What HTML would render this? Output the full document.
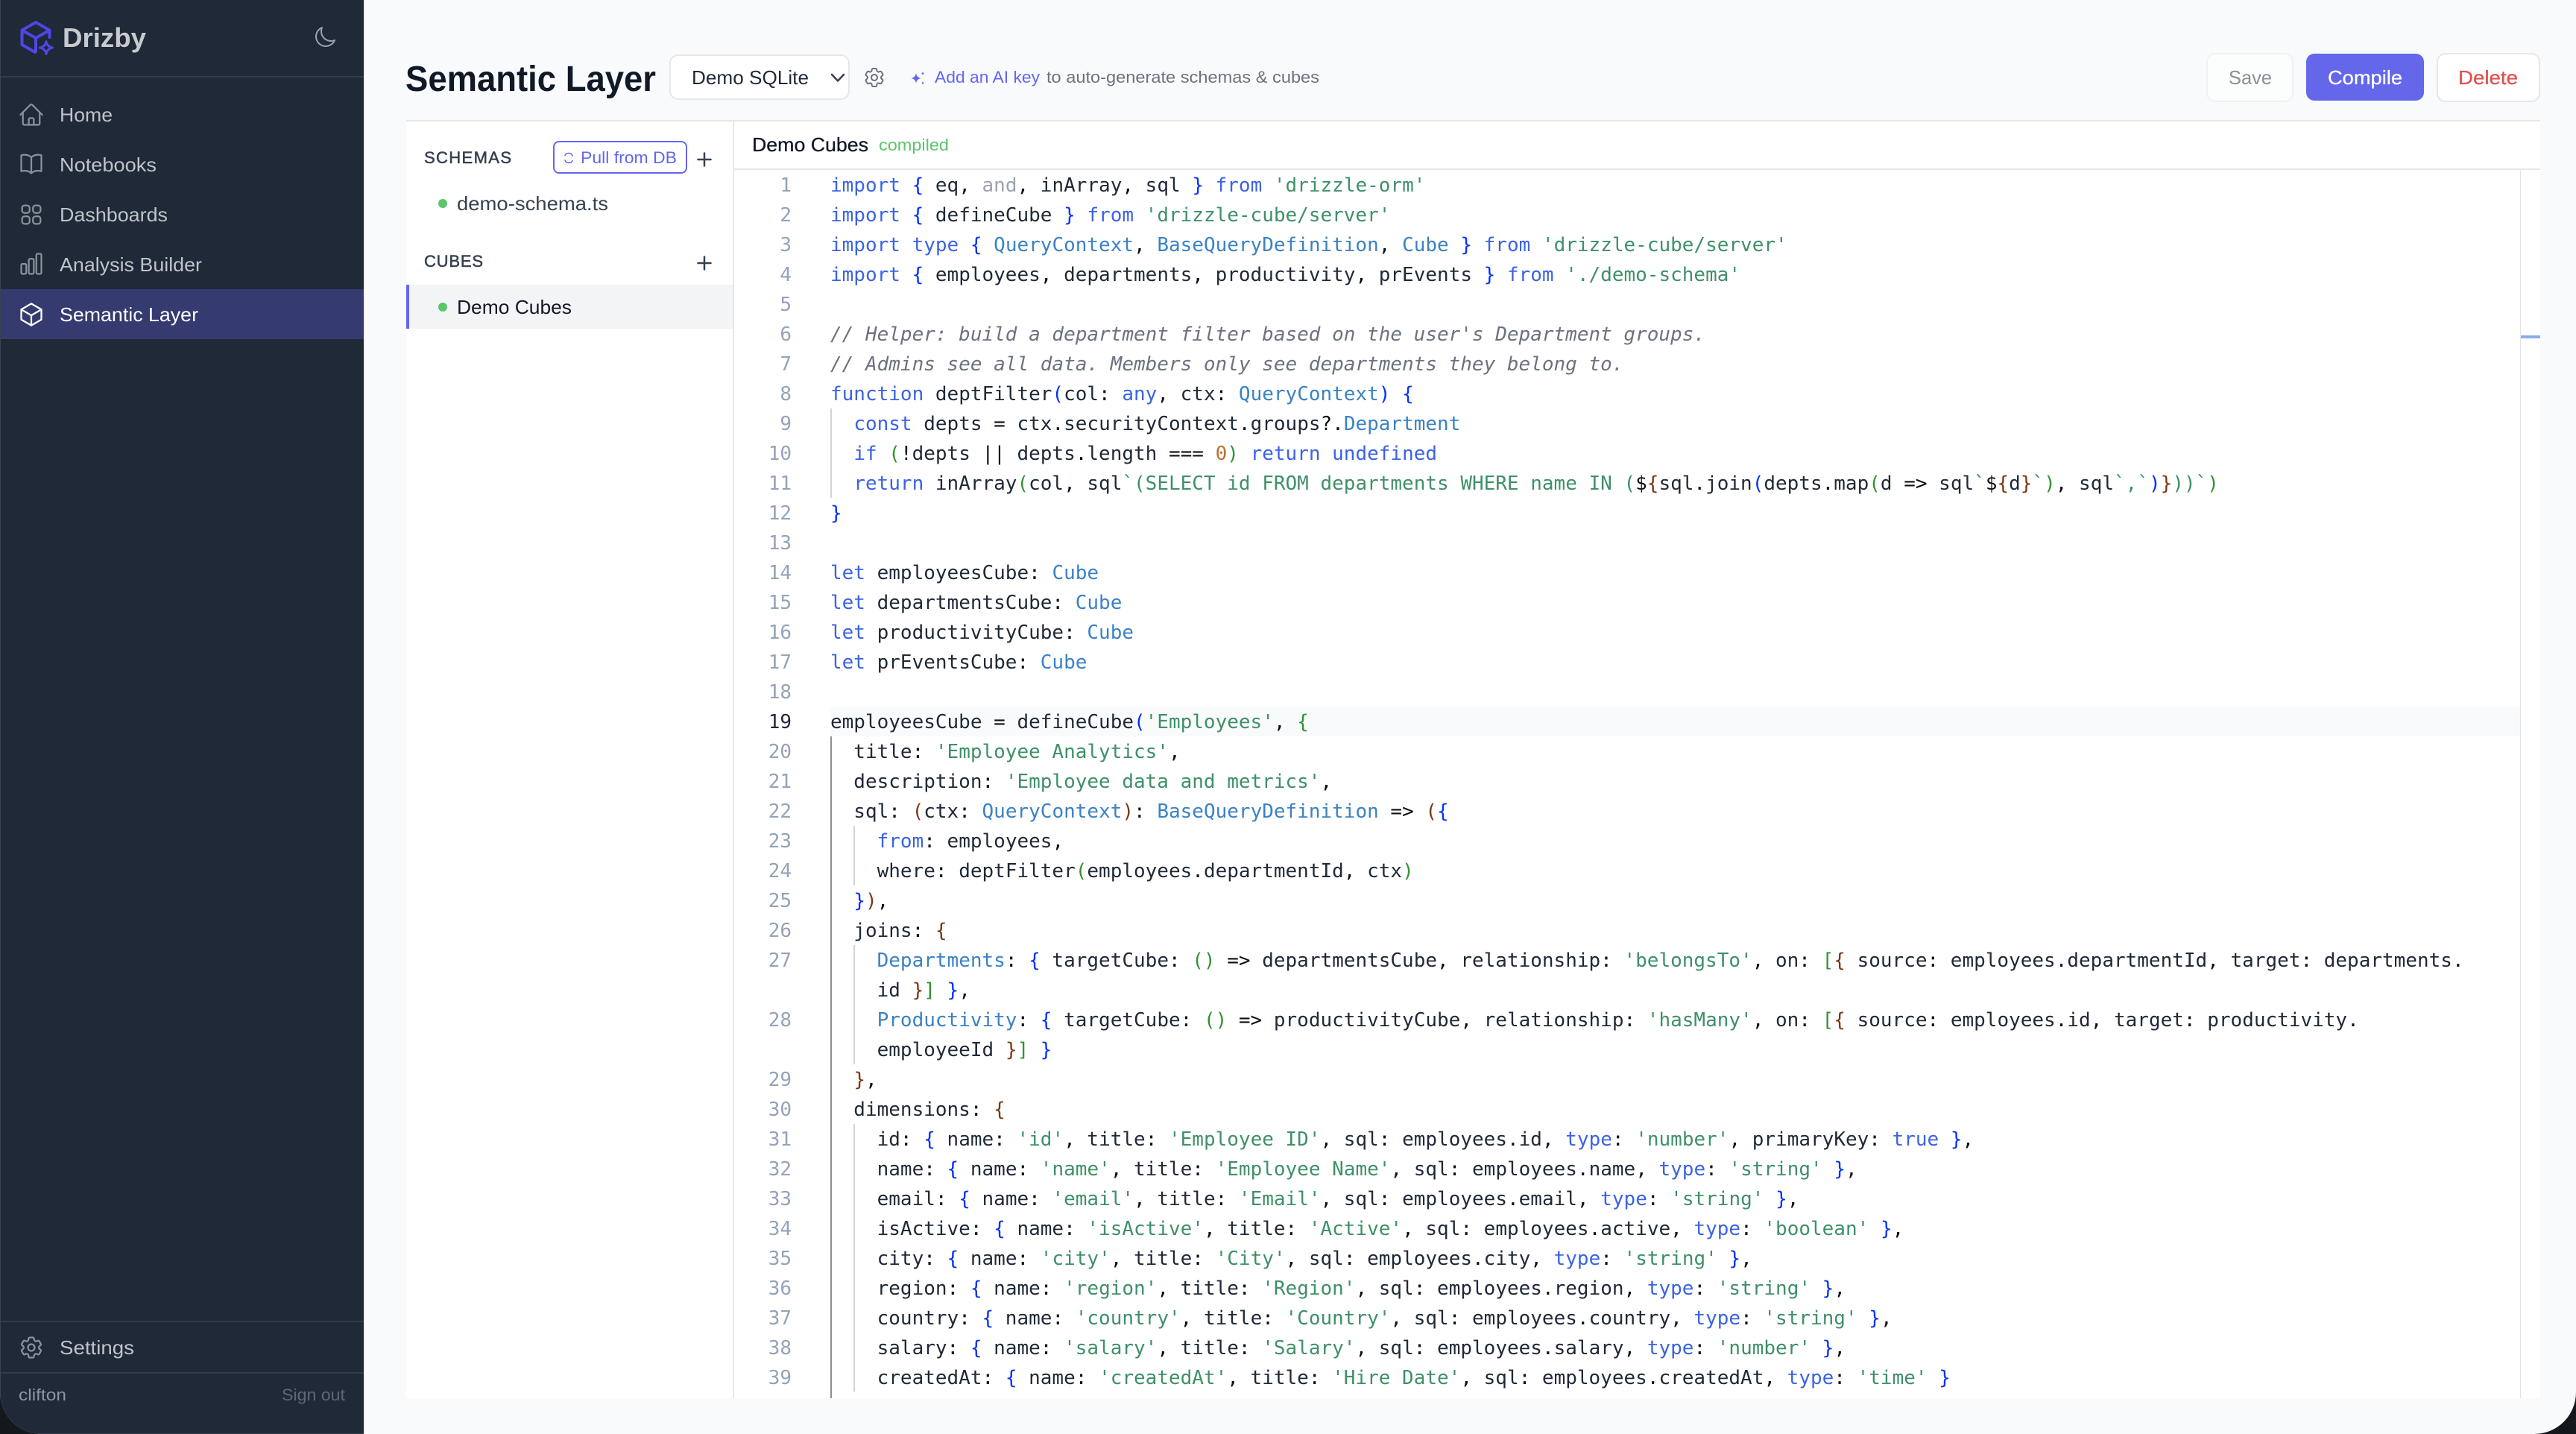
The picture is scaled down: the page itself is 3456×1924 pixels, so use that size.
<!DOCTYPE html>
<html lang="en"><head><meta charset="utf-8"><title>Semantic Layer</title>
<style>
html,body{margin:0;padding:0;width:3456px;height:1924px;overflow:hidden;background:#14181c}
#app{position:absolute;left:0;top:0;width:3456px;height:1924px;background:#f9fafb;border-radius:0 0 56px 56px;overflow:hidden}
.box{position:absolute;box-sizing:border-box}
#code{position:absolute;left:985px;top:228px;width:2396px;height:1648px;overflow:hidden;font:26px/40px "DejaVu Sans Mono",monospace;color:#1f2937;font-variant-ligatures:none;white-space:pre}
.l{position:absolute;left:129px;height:40px;right:0;margin-top:1px}
.n{position:absolute;left:15px;width:62px;height:40px;text-align:right;color:#94a3b8;margin-top:1px}
b,u,s,em,i,var,a{font-weight:400;font-style:normal;text-decoration:none}
b{color:#3b63e4}s{color:#3b82c4}u{color:#3f9068}em{color:#0d1117}i{color:#6b7280;font-style:italic}var{color:#c2702b}
.m{color:#9ca3af}.B{color:#0431fa}.G{color:#319331}.R{color:#7b3814}
svg text{font-family:"Liberation Sans",sans-serif}
</style></head><body>
<div id="app">
<div class="box" style="left:0;top:0;width:488px;height:1924px;background:#1f2937;border-left:1px solid #394250;border-bottom:1px solid #343d4b"></div>
<div class="box" style="left:1px;top:102px;width:487px;height:2px;background:#343d4b"></div>
<div class="box" style="left:1px;top:388px;width:487px;height:67px;background:#353b6f"></div>
<div class="box" style="left:1px;top:1772px;width:487px;height:2px;background:#343d4b"></div>
<div class="box" style="left:1px;top:1841px;width:487px;height:2px;background:#343d4b"></div>

<div class="box" style="left:898px;top:73px;width:242px;height:61px;background:#fff;border:2px solid #e5e7eb;border-radius:12px"></div>
<div class="box" style="left:2960px;top:71px;width:117px;height:66px;background:#fcfdfd;border:2px solid #f0f1f3;border-radius:12px"></div>
<div class="box" style="left:3094px;top:72px;width:158px;height:63px;background:#6467e9;border-radius:11px"></div>
<div class="box" style="left:3269px;top:71px;width:139px;height:66px;background:#fff;border:2px solid #e5e7eb;border-radius:12px"></div>

<div class="box" style="left:545px;top:161px;width:2863px;height:1715px;background:#fff;border-top:2px solid #e5e7eb"></div>
<div class="box" style="left:983px;top:163px;width:2px;height:1713px;background:#e5e7eb"></div>
<div class="box" style="left:985px;top:226px;width:2423px;height:2px;background:#e5e7eb"></div>
<div class="box" style="left:742px;top:189px;width:180px;height:44px;border:2px solid #6366f1;border-radius:8px"></div>
<div class="box" style="left:545px;top:382px;width:438px;height:59px;background:#f3f4f6;border-left:4px solid #6366f1"></div>
<div class="box" style="left:588px;top:267px;width:12px;height:12px;border-radius:50%;background:#5cc46b"></div>
<div class="box" style="left:588px;top:406px;width:12px;height:12px;border-radius:50%;background:#5cc46b"></div>
<div class="box" style="left:3381px;top:228px;width:1px;height:1648px;background:#e1e3e7"></div>
<div class="box" style="left:3382px;top:450px;width:26px;height:4px;background:#8aabf0"></div>

<div id="code">
<div class="box" style="left:129px;top:720px;right:0;height:40px;background:#f9fafb"></div>
<div class="box" style="left:129px;top:320px;width:2px;height:120px;background:#d4d4d4"></div>
<div class="box" style="left:129px;top:760px;width:2px;height:888px;background:#8d8f94"></div>
<div class="box" style="left:160px;top:880px;width:2px;height:80px;background:#d4d4d4"></div>
<div class="box" style="left:160px;top:1040px;width:2px;height:160px;background:#d4d4d4"></div>
<div class="box" style="left:160px;top:1280px;width:2px;height:359px;background:#d4d4d4"></div>

<div class="n" style="top:0">1</div><div class="l" style="top:0"><b>import</b> <a class="B">{</a> eq<em>,</em> <span class="m">and</span><em>,</em> inArray<em>,</em> sql <a class="B">}</a> <b>from</b> <u>'drizzle-orm'</u></div>
<div class="n" style="top:40px">2</div><div class="l" style="top:40px"><b>import</b> <a class="B">{</a> defineCube <a class="B">}</a> <b>from</b> <u>'drizzle-cube/server'</u></div>
<div class="n" style="top:80px">3</div><div class="l" style="top:80px"><b>import</b> <b>type</b> <a class="B">{</a> <s>QueryContext</s><em>,</em> <s>BaseQueryDefinition</s><em>,</em> <s>Cube</s> <a class="B">}</a> <b>from</b> <u>'drizzle-cube/server'</u></div>
<div class="n" style="top:120px">4</div><div class="l" style="top:120px"><b>import</b> <a class="B">{</a> employees<em>,</em> departments<em>,</em> productivity<em>,</em> prEvents <a class="B">}</a> <b>from</b> <u>'./demo-schema'</u></div>
<div class="n" style="top:160px">5</div>
<div class="n" style="top:200px">6</div><div class="l" style="top:200px"><i>// Helper: build a department filter based on the user's Department groups.</i></div>
<div class="n" style="top:240px">7</div><div class="l" style="top:240px"><i>// Admins see all data. Members only see departments they belong to.</i></div>
<div class="n" style="top:280px">8</div><div class="l" style="top:280px"><b>function</b> deptFilter<a class="B">(</a>col<em>:</em> <b>any</b><em>,</em> ctx<em>:</em> <s>QueryContext</s><a class="B">)</a> <a class="B">{</a></div>
<div class="n" style="top:320px">9</div><div class="l" style="top:320px">  <b>const</b> depts <em>=</em> ctx<em>.</em>securityContext<em>.</em>groups<em>?.</em><s>Department</s></div>
<div class="n" style="top:360px">10</div><div class="l" style="top:360px">  <b>if</b> <a class="G">(</a><em>!</em>depts <em>||</em> depts<em>.</em>length <em>===</em> <var>0</var><a class="G">)</a> <b>return</b> <b>undefined</b></div>
<div class="n" style="top:400px">11</div><div class="l" style="top:400px">  <b>return</b> inArray<a class="G">(</a>col<em>,</em> sql<u>`(SELECT id FROM departments WHERE name IN (</u><em>$</em><a class="R">{</a>sql<em>.</em>join<a class="B">(</a>depts<em>.</em>map<a class="G">(</a>d <em>=&gt;</em> sql<u>`</u><em>$</em><a class="R">{</a>d<a class="R">}</a><u>`</u><a class="G">)</a><em>,</em> sql<u>`,`</u><a class="B">)</a><a class="R">}</a><u>))`</u><a class="G">)</a></div>
<div class="n" style="top:440px">12</div><div class="l" style="top:440px"><a class="B">}</a></div>
<div class="n" style="top:480px">13</div>
<div class="n" style="top:520px">14</div><div class="l" style="top:520px"><b>let</b> employeesCube<em>:</em> <s>Cube</s></div>
<div class="n" style="top:560px">15</div><div class="l" style="top:560px"><b>let</b> departmentsCube<em>:</em> <s>Cube</s></div>
<div class="n" style="top:600px">16</div><div class="l" style="top:600px"><b>let</b> productivityCube<em>:</em> <s>Cube</s></div>
<div class="n" style="top:640px">17</div><div class="l" style="top:640px"><b>let</b> prEventsCube<em>:</em> <s>Cube</s></div>
<div class="n" style="top:680px">18</div>
<div class="n" style="top:720px;color:#1f2937">19</div><div class="l" style="top:720px">employeesCube <em>=</em> defineCube<a class="B">(</a><u>'Employees'</u><em>,</em> <a class="G">{</a></div>
<div class="n" style="top:760px">20</div><div class="l" style="top:760px">  title<em>:</em> <u>'Employee Analytics'</u><em>,</em></div>
<div class="n" style="top:800px">21</div><div class="l" style="top:800px">  description<em>:</em> <u>'Employee data and metrics'</u><em>,</em></div>
<div class="n" style="top:840px">22</div><div class="l" style="top:840px">  sql<em>:</em> <a class="R">(</a>ctx<em>:</em> <s>QueryContext</s><a class="R">)</a><em>:</em> <s>BaseQueryDefinition</s> <em>=&gt;</em> <a class="R">(</a><a class="B">{</a></div>
<div class="n" style="top:880px">23</div><div class="l" style="top:880px">    <b>from</b><em>:</em> employees<em>,</em></div>
<div class="n" style="top:920px">24</div><div class="l" style="top:920px">    where<em>:</em> deptFilter<a class="G">(</a>employees<em>.</em>departmentId<em>,</em> ctx<a class="G">)</a></div>
<div class="n" style="top:960px">25</div><div class="l" style="top:960px">  <a class="B">}</a><a class="R">)</a><em>,</em></div>
<div class="n" style="top:1000px">26</div><div class="l" style="top:1000px">  joins<em>:</em> <a class="R">{</a></div>
<div class="n" style="top:1040px">27</div><div class="l" style="top:1040px">    <s>Departments</s><em>:</em> <a class="B">{</a> targetCube<em>:</em> <a class="G">()</a> <em>=&gt;</em> departmentsCube<em>,</em> relationship<em>:</em> <u>'belongsTo'</u><em>,</em> on<em>:</em> <a class="G">[</a><a class="R">{</a> source<em>:</em> employees<em>.</em>departmentId<em>,</em> target<em>:</em> departments<em>.</em></div>
<div class="l" style="top:1080px">    id <a class="R">}</a><a class="G">]</a> <a class="B">}</a><em>,</em></div>
<div class="n" style="top:1120px">28</div><div class="l" style="top:1120px">    <s>Productivity</s><em>:</em> <a class="B">{</a> targetCube<em>:</em> <a class="G">()</a> <em>=&gt;</em> productivityCube<em>,</em> relationship<em>:</em> <u>'hasMany'</u><em>,</em> on<em>:</em> <a class="G">[</a><a class="R">{</a> source<em>:</em> employees<em>.</em>id<em>,</em> target<em>:</em> productivity<em>.</em></div>
<div class="l" style="top:1160px">    employeeId <a class="R">}</a><a class="G">]</a> <a class="B">}</a></div>
<div class="n" style="top:1200px">29</div><div class="l" style="top:1200px">  <a class="R">}</a><em>,</em></div>
<div class="n" style="top:1240px">30</div><div class="l" style="top:1240px">  dimensions<em>:</em> <a class="R">{</a></div>
<div class="n" style="top:1280px">31</div><div class="l" style="top:1280px">    id<em>:</em> <a class="B">{</a> name<em>:</em> <u>'id'</u><em>,</em> title<em>:</em> <u>'Employee ID'</u><em>,</em> sql<em>:</em> employees<em>.</em>id<em>,</em> <b>type</b><em>:</em> <u>'number'</u><em>,</em> primaryKey<em>:</em> <b>true</b> <a class="B">}</a><em>,</em></div>
<div class="n" style="top:1320px">32</div><div class="l" style="top:1320px">    name<em>:</em> <a class="B">{</a> name<em>:</em> <u>'name'</u><em>,</em> title<em>:</em> <u>'Employee Name'</u><em>,</em> sql<em>:</em> employees<em>.</em>name<em>,</em> <b>type</b><em>:</em> <u>'string'</u> <a class="B">}</a><em>,</em></div>
<div class="n" style="top:1360px">33</div><div class="l" style="top:1360px">    email<em>:</em> <a class="B">{</a> name<em>:</em> <u>'email'</u><em>,</em> title<em>:</em> <u>'Email'</u><em>,</em> sql<em>:</em> employees<em>.</em>email<em>,</em> <b>type</b><em>:</em> <u>'string'</u> <a class="B">}</a><em>,</em></div>
<div class="n" style="top:1400px">34</div><div class="l" style="top:1400px">    isActive<em>:</em> <a class="B">{</a> name<em>:</em> <u>'isActive'</u><em>,</em> title<em>:</em> <u>'Active'</u><em>,</em> sql<em>:</em> employees<em>.</em>active<em>,</em> <b>type</b><em>:</em> <u>'boolean'</u> <a class="B">}</a><em>,</em></div>
<div class="n" style="top:1440px">35</div><div class="l" style="top:1440px">    city<em>:</em> <a class="B">{</a> name<em>:</em> <u>'city'</u><em>,</em> title<em>:</em> <u>'City'</u><em>,</em> sql<em>:</em> employees<em>.</em>city<em>,</em> <b>type</b><em>:</em> <u>'string'</u> <a class="B">}</a><em>,</em></div>
<div class="n" style="top:1480px">36</div><div class="l" style="top:1480px">    region<em>:</em> <a class="B">{</a> name<em>:</em> <u>'region'</u><em>,</em> title<em>:</em> <u>'Region'</u><em>,</em> sql<em>:</em> employees<em>.</em>region<em>,</em> <b>type</b><em>:</em> <u>'string'</u> <a class="B">}</a><em>,</em></div>
<div class="n" style="top:1520px">37</div><div class="l" style="top:1520px">    country<em>:</em> <a class="B">{</a> name<em>:</em> <u>'country'</u><em>,</em> title<em>:</em> <u>'Country'</u><em>,</em> sql<em>:</em> employees<em>.</em>country<em>,</em> <b>type</b><em>:</em> <u>'string'</u> <a class="B">}</a><em>,</em></div>
<div class="n" style="top:1560px">38</div><div class="l" style="top:1560px">    salary<em>:</em> <a class="B">{</a> name<em>:</em> <u>'salary'</u><em>,</em> title<em>:</em> <u>'Salary'</u><em>,</em> sql<em>:</em> employees<em>.</em>salary<em>,</em> <b>type</b><em>:</em> <u>'number'</u> <a class="B">}</a><em>,</em></div>
<div class="n" style="top:1600px">39</div><div class="l" style="top:1600px">    createdAt<em>:</em> <a class="B">{</a> name<em>:</em> <u>'createdAt'</u><em>,</em> title<em>:</em> <u>'Hire Date'</u><em>,</em> sql<em>:</em> employees<em>.</em>createdAt<em>,</em> <b>type</b><em>:</em> <u>'time'</u> <a class="B">}</a></div>
<div class="l" style="top:1640px">  <a class="R">}</a><em>,</em></div>
</div>

<svg class="box" style="left:0;top:0" width="3456" height="1924" viewBox="0 0 3456 1924" fill="none">
<!-- logo -->
<g stroke="#4f46e5" stroke-width="4" stroke-linecap="round" stroke-linejoin="round">
<path d="M66.500 50V40.500L48 30 29.500 40.500V60L47 70"/>
<path d="M29.500 40.500 48 51 66.500 40.500M48 51V69"/>
<path stroke-width="3" d="M62 55.500Q63.200 62.800 70.500 64 63.200 65.200 62 72.500 60.800 65.200 53.500 64 60.800 62.800 62 55.500Z"/>
</g>
<text x="84" y="63" font-size="36" font-weight="700" fill="#c8cad0" textLength="112" lengthAdjust="spacingAndGlyphs">Drizby</text>
<svg x="420" y="34" width="32" height="32" viewBox="0 0 24 24" stroke="#9ca3af" stroke-width="1.5" stroke-linecap="round" stroke-linejoin="round"><path d="M21.752 15.002A9.72 9.72 0 0 1 18 15.750c-5.385 0-9.750-4.365-9.750-9.750 0-1.330.266-2.597.748-3.752A9.753 9.753 0 0 0 3 11.250C3 16.635 7.365 21 12.750 21a9.753 9.753 0 0 0 9.002-5.998Z"/></svg>

<!-- nav icons -->
<g stroke="#8b919c" stroke-width="1.5" stroke-linecap="round" stroke-linejoin="round">
<svg x="24" y="136" width="36" height="36" viewBox="0 0 24 24"><path d="m2.250 12 8.954-8.955c.44-.439 1.152-.439 1.591 0L21.750 12M4.500 9.750v10.125c0 .621.504 1.125 1.125 1.125H9.750v-4.875c0-.621.504-1.125 1.125-1.125h2.250c.621 0 1.125.504 1.125 1.125V21h4.125c.621 0 1.125-.504 1.125-1.125V9.750M8.250 21h8.250"/></svg>
<svg x="24" y="202" width="36" height="36" viewBox="0 0 24 24"><path d="M12 6.042A8.967 8.967 0 0 0 6 3.750c-1.052 0-2.062.18-3 .512v14.250A8.987 8.987 0 0 1 6 18c2.305 0 4.408.867 6 2.292m0-14.250a8.966 8.966 0 0 1 6-2.292c1.052 0 2.062.18 3 .512v14.250A8.987 8.987 0 0 0 18 18a8.967 8.967 0 0 0-6 2.292m0-14.250v14.250"/></svg>
<svg x="24" y="270" width="36" height="36" viewBox="0 0 24 24"><path d="M3.750 6A2.250 2.250 0 0 1 6 3.750h2.250A2.250 2.250 0 0 1 10.500 6v2.250a2.250 2.250 0 0 1-2.250 2.250H6a2.250 2.250 0 0 1-2.250-2.250V6ZM3.750 15.750A2.250 2.250 0 0 1 6 13.500h2.250a2.250 2.250 0 0 1 2.250 2.250V18a2.250 2.250 0 0 1-2.250 2.250H6A2.250 2.250 0 0 1 3.750 18v-2.250ZM13.500 6a2.250 2.250 0 0 1 2.250-2.250H18A2.250 2.250 0 0 1 20.250 6v2.250A2.250 2.250 0 0 1 18 10.500h-2.250a2.250 2.250 0 0 1-2.250-2.250V6ZM13.500 15.750a2.250 2.250 0 0 1 2.250-2.250H18a2.250 2.250 0 0 1 2.250 2.250V18A2.250 2.250 0 0 1 18 20.250h-2.250A2.250 2.250 0 0 1 13.500 18v-2.250Z"/></svg>
<svg x="24" y="336" width="36" height="36" viewBox="0 0 24 24"><path d="M3 13.125C3 12.504 3.504 12 4.125 12h2.250c.621 0 1.125.504 1.125 1.125v6.750C7.500 20.496 6.996 21 6.375 21h-2.250A1.125 1.125 0 0 1 3 19.875v-6.750ZM9.750 8.625c0-.621.504-1.125 1.125-1.125h2.250c.621 0 1.125.504 1.125 1.125v11.250c0 .621-.504 1.125-1.125 1.125h-2.250a1.125 1.125 0 0 1-1.125-1.125V8.625ZM16.500 4.125c0-.621.504-1.125 1.125-1.125h2.250C20.496 3 21 3.504 21 4.125v15.750c0 .621-.504 1.125-1.125 1.125h-2.250a1.125 1.125 0 0 1-1.125-1.125V4.125Z"/></svg>
<svg x="24" y="404" width="36" height="36" viewBox="0 0 24 24" stroke="#ffffff"><path d="m21 7.500-9-5.250L3 7.500m18 0-9 5.250m9-5.250v9l-9 5.250M3 7.500l9 5.250M3 7.500v9l9 5.250m0-9v9"/></svg>
<svg x="24" y="1790" width="36" height="36" viewBox="0 0 24 24"><path d="M9.594 3.940c.09-.542.56-.94 1.110-.94h2.593c.55 0 1.020.398 1.110.94l.213 1.281c.063.374.313.686.645.870.074.040.147.083.22.127.325.196.72.257 1.075.124l1.217-.456a1.125 1.125 0 0 1 1.370.49l1.296 2.247a1.125 1.125 0 0 1-.26 1.431l-1.003.827c-.293.241-.438.613-.43.992a7.723 7.723 0 0 1 0 .255c-.008.378.137.75.43.991l1.004.827c.424.35.534.955.26 1.430l-1.298 2.247a1.125 1.125 0 0 1-1.369.491l-1.217-.456c-.355-.133-.75-.072-1.076.124a6.470 6.470 0 0 1-.22.128c-.331.183-.581.495-.644.869l-.213 1.281c-.09.543-.56.94-1.110.94h-2.594c-.55 0-1.019-.398-1.110-.94l-.213-1.281c-.062-.374-.312-.686-.644-.870a6.520 6.520 0 0 1-.22-.127c-.325-.196-.72-.257-1.076-.124l-1.217.456a1.125 1.125 0 0 1-1.369-.49l-1.297-2.247a1.125 1.125 0 0 1 .26-1.431l1.004-.827c.292-.24.437-.613.43-.991a6.932 6.932 0 0 1 0-.255c.007-.38-.138-.751-.43-.992l-1.004-.827a1.125 1.125 0 0 1-.26-1.430l1.297-2.247a1.125 1.125 0 0 1 1.370-.491l1.216.456c.356.133.751.072 1.076-.124.072-.044.146-.086.22-.128.332-.183.582-.495.644-.869l.214-1.280Z"/><path d="M15 12a3 3 0 1 1-6 0 3 3 0 0 1 6 0Z"/></svg>
</g>

<!-- sidebar text -->
<g font-size="26" fill="#bfc3ca">
<text x="80" y="163" textLength="71" lengthAdjust="spacingAndGlyphs">Home</text>
<text x="80" y="230" textLength="130" lengthAdjust="spacingAndGlyphs">Notebooks</text>
<text x="80" y="297" textLength="145" lengthAdjust="spacingAndGlyphs">Dashboards</text>
<text x="80" y="364" textLength="191" lengthAdjust="spacingAndGlyphs">Analysis Builder</text>
<text x="80" y="431" textLength="186" lengthAdjust="spacingAndGlyphs" fill="#fff">Semantic Layer</text>
<text x="80" y="1817" textLength="100" lengthAdjust="spacingAndGlyphs">Settings</text>
</g>
<text x="25" y="1879" font-size="22" fill="#8f95a0" textLength="64" lengthAdjust="spacingAndGlyphs">clifton</text>
<text x="378" y="1879" font-size="22" fill="#5f6875" textLength="85" lengthAdjust="spacingAndGlyphs">Sign out</text>

<!-- top bar -->
<text x="544" y="122" font-size="48" font-weight="700" fill="#111827" textLength="336" lengthAdjust="spacingAndGlyphs">Semantic Layer</text>
<text x="928" y="113" font-size="26" fill="#1f2937" textLength="157" lengthAdjust="spacingAndGlyphs">Demo SQLite</text>
<path d="M1116 100l8 8.500 8-8.500" stroke="#374151" stroke-width="2.500" stroke-linecap="round" stroke-linejoin="round"/>
<svg x="1157" y="88" width="32" height="32" viewBox="0 0 24 24" stroke="#6b7280" stroke-width="1.500" stroke-linecap="round" stroke-linejoin="round"><path d="M9.594 3.940c.09-.542.56-.94 1.110-.94h2.593c.55 0 1.020.398 1.110.94l.213 1.281c.063.374.313.686.645.870.074.040.147.083.22.127.325.196.72.257 1.075.124l1.217-.456a1.125 1.125 0 0 1 1.370.49l1.296 2.247a1.125 1.125 0 0 1-.26 1.431l-1.003.827c-.293.241-.438.613-.43.992a7.723 7.723 0 0 1 0 .255c-.008.378.137.75.43.991l1.004.827c.424.35.534.955.26 1.430l-1.298 2.247a1.125 1.125 0 0 1-1.369.491l-1.217-.456c-.355-.133-.75-.072-1.076.124a6.470 6.470 0 0 1-.22.128c-.331.183-.581.495-.644.869l-.213 1.281c-.09.543-.56.94-1.110.94h-2.594c-.55 0-1.019-.398-1.110-.94l-.213-1.281c-.062-.374-.312-.686-.644-.870a6.520 6.520 0 0 1-.22-.127c-.325-.196-.72-.257-1.076-.124l-1.217.456a1.125 1.125 0 0 1-1.369-.49l-1.297-2.247a1.125 1.125 0 0 1 .26-1.431l1.004-.827c.292-.24.437-.613.43-.991a6.932 6.932 0 0 1 0-.255c.007-.38-.138-.751-.43-.992l-1.004-.827a1.125 1.125 0 0 1-.26-1.430l1.297-2.247a1.125 1.125 0 0 1 1.370-.491l1.216.456c.356.133.751.072 1.076-.124.072-.044.146-.086.22-.128.332-.183.582-.495.644-.869l.214-1.280Z"/><path d="M15 12a3 3 0 1 1-6 0 3 3 0 0 1 6 0Z"/></svg>
<path fill="#6366f1" d="M1229 98.500q1 5.500 6.500 6.500-5.500 1-6.500 6.500-1-5.500-6.500-6.500 5.500-1 6.500-6.500Z"/>
<path fill="#6366f1" d="M1238 96q.4 2.100 2.200 2.500-1.800.4-2.200 2.500-.4-2.100-2.200-2.500 1.800-.4 2.200-2.500ZM1238 109q.4 1.900 2 2.300-1.600.4-2 2.300-.4-1.900-2-2.300 1.600-.4 2-2.300Z"/>
<text x="1254" y="111" font-size="22" fill="#6366f1" textLength="141" lengthAdjust="spacingAndGlyphs">Add an AI key</text>
<text x="1404" y="111" font-size="22" fill="#6b7280" textLength="366" lengthAdjust="spacingAndGlyphs">to auto-generate schemas &amp; cubes</text>
<text x="2990" y="113" font-size="26" fill="#8b8f98" textLength="58" lengthAdjust="spacingAndGlyphs">Save</text>
<text x="3123" y="113" font-size="26" fill="#fff" textLength="100" lengthAdjust="spacingAndGlyphs" stroke="#fff" stroke-width=".3">Compile</text>
<text x="3298" y="113" font-size="26" fill="#e05150" textLength="80" lengthAdjust="spacingAndGlyphs" stroke="#e05150" stroke-width=".3">Delete</text>

<!-- file panel -->
<text x="569" y="219" font-size="22" fill="#374151" stroke="#374151" stroke-width=".55" textLength="117" lengthAdjust="spacing">SCHEMAS</text>
<path d="M768 209a5.500 5.500 0 0 0-10-.5M758 215a5.500 5.500 0 0 0 10 .5" stroke="#6366f1" stroke-width="1.500" stroke-linecap="round" stroke-linejoin="round"/>
<text x="779" y="219" font-size="22" fill="#6366f1" textLength="129" lengthAdjust="spacingAndGlyphs">Pull from DB</text>
<path d="M945 205.500v17M936.500 214h17M945 344.500v17M936.500 353h17" stroke="#374151" stroke-width="2.500" stroke-linecap="round"/>
<text x="613" y="282" font-size="26" fill="#374151" textLength="203" lengthAdjust="spacingAndGlyphs">demo-schema.ts</text>
<text x="569" y="358" font-size="22" fill="#374151" stroke="#374151" stroke-width=".55" textLength="79" lengthAdjust="spacing">CUBES</text>
<text x="613" y="421" font-size="26" fill="#111827" textLength="154" lengthAdjust="spacingAndGlyphs">Demo Cubes</text>

<!-- editor header -->
<text x="1009" y="203" font-size="26" fill="#111827" stroke="#111827" stroke-width=".3" textLength="156" lengthAdjust="spacingAndGlyphs">Demo Cubes</text>
<text x="1179" y="202" font-size="22" fill="#5cc46b" textLength="94" lengthAdjust="spacingAndGlyphs">compiled</text>
</svg>
</div>
</body></html>
